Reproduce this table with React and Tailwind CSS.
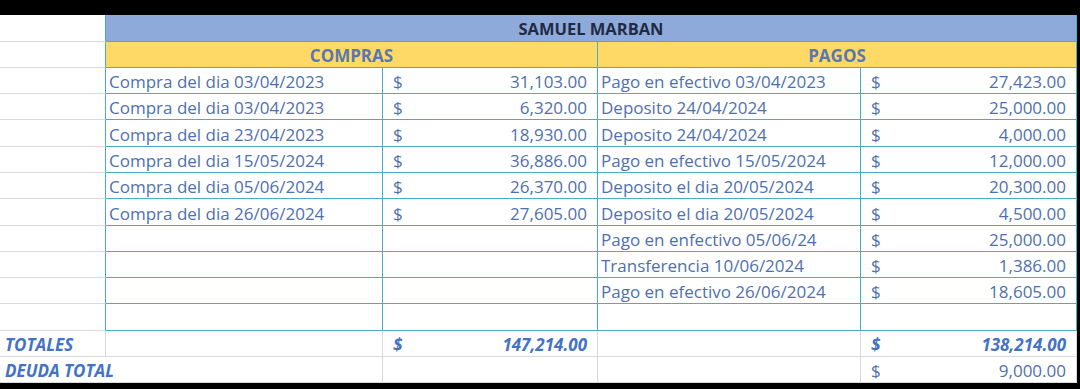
import React from 'react';

const compras = [
  ['Compra del dia 03/04/2023', '31,103.00'],
  ['Compra del dia 03/04/2023', '6,320.00'],
  ['Compra del dia 23/04/2023', '18,930.00'],
  ['Compra del dia 15/05/2024', '36,886.00'],
  ['Compra del dia 05/06/2024', '26,370.00'],
  ['Compra del dia 26/06/2024', '27,605.00'],
];

const pagos = [
  ['Pago en efectivo 03/04/2023', '27,423.00'],
  ['Deposito 24/04/2024', '25,000.00'],
  ['Deposito 24/04/2024', '4,000.00'],
  ['Pago en efectivo 15/05/2024', '12,000.00'],
  ['Deposito el dia 20/05/2024', '20,300.00'],
  ['Deposito el dia 20/05/2024', '4,500.00'],
  ['Pago en enfectivo 05/06/24', '25,000.00'],
  ['Transferencia 10/06/2024', '1,386.00'],
  ['Pago en efectivo 26/06/2024', '18,605.00'],
];

// row heights so lines land on the same pixels as the sheet
const dataHeights = ['h-[26px]', 'h-[26px]', 'h-[27px]', 'h-[26px]', 'h-[26px]', 'h-[27px]', 'h-[26px]', 'h-[26px]', 'h-[26px]', 'h-[27px]'];

const Money = ({ value, strong }) => (
  <div className={`flex items-center justify-between pl-[10px] pr-[10px] ${strong ? 'font-bold italic text-[#4472c4]' : ''}`}>
    <span>{value ? '$' : ''}</span>
    <span>{value}</span>
  </div>
);

export default function App() {
  const rows = Array.from({ length: 10 }, (_, i) => ({ c: compras[i], p: pagos[i] }));

  return (
    <div className="w-[1080px] h-[389px] bg-black pt-[15px] overflow-hidden" style={{ fontFamily: '"Open Sans", Lato, sans-serif' }}>
      <div className="w-[1077px] bg-white text-[17px] text-[#4f70b0] leading-none">
        {/* name header */}
        <div className="grid grid-cols-[106px_971px] h-[27px]">
          <div className="border-r border-b border-r-[#4bacc6] border-b-[#d9d9d9]" />
          <div className="bg-[#8eaadb] border-r border-b border-[#4bacc6] flex items-center justify-center font-bold text-[16.5px] text-[#1f2a44] pt-[2px]">
            SAMUEL MARBAN
          </div>
        </div>
        {/* section header */}
        <div className="grid grid-cols-[106px_492px_479px] h-[26px]">
          <div className="border-r border-b border-r-[#4bacc6] border-b-[#d9d9d9]" />
          <div className="bg-[#ffd966] border-r border-b border-[#4bacc6] flex items-center justify-center font-bold text-[#5a78ad] pt-[2px]">
            COMPRAS
          </div>
          <div className="bg-[#ffd966] border-r border-b border-[#4bacc6] flex items-center justify-center font-bold text-[#5a78ad] pt-[2px]">
            PAGOS
          </div>
        </div>
        {/* data */}
        {rows.map((r, i) => (
          <div key={i} className={`grid grid-cols-[106px_277px_215px_263px_216px] ${dataHeights[i]}`}>
            <div className="border-r border-b border-r-[#4bacc6] border-b-[#d9d9d9]" />
            <div className="border-r border-b border-[#4bacc6] flex items-center pl-[3px] pt-[2px] whitespace-nowrap">
              {r.c ? r.c[0] : ''}
            </div>
            <div className="border-r border-b border-[#4bacc6] flex items-center pt-[2px]">
              <div className="w-full"><Money value={r.c ? r.c[1] : ''} /></div>
            </div>
            <div className="border-r border-b border-[#4bacc6] flex items-center pl-[3px] pt-[2px] whitespace-nowrap">
              {r.p ? r.p[0] : ''}
            </div>
            <div className="border-r border-b border-[#4bacc6] flex items-center pt-[2px]">
              <div className="w-full"><Money value={r.p ? r.p[1] : ''} /></div>
            </div>
          </div>
        ))}
        {/* totals */}
        <div className="grid grid-cols-[106px_277px_215px_263px_216px] h-[26px]">
          <div className="border-r border-b border-[#d9d9d9] flex items-center pl-[5px] pt-[2px] font-bold italic text-[#4472c4]">
            TOTALES
          </div>
          <div className="border-r border-b border-[#d9d9d9]" />
          <div className="border-r border-b border-[#d9d9d9] flex items-center pt-[2px]">
            <div className="w-full"><Money value="147,214.00" strong /></div>
          </div>
          <div className="border-r border-b border-[#d9d9d9]" />
          <div className="border-r border-b border-[#d9d9d9] flex items-center pt-[2px]">
            <div className="w-full"><Money value="138,214.00" strong /></div>
          </div>
        </div>
        <div className="grid grid-cols-[383px_215px_263px_216px] h-[26px]">
          <div className="border-r border-b border-[#d9d9d9] flex items-center pl-[5px] pt-[2px] font-bold italic text-[#4472c4]">
            DEUDA TOTAL
          </div>
          <div className="border-r border-b border-[#d9d9d9]" />
          <div className="border-r border-b border-[#d9d9d9]" />
          <div className="border-r border-b border-[#d9d9d9] flex items-center pt-[2px]">
            <div className="w-full"><Money value="9,000.00" /></div>
          </div>
        </div>
      </div>
    </div>
  );
}
